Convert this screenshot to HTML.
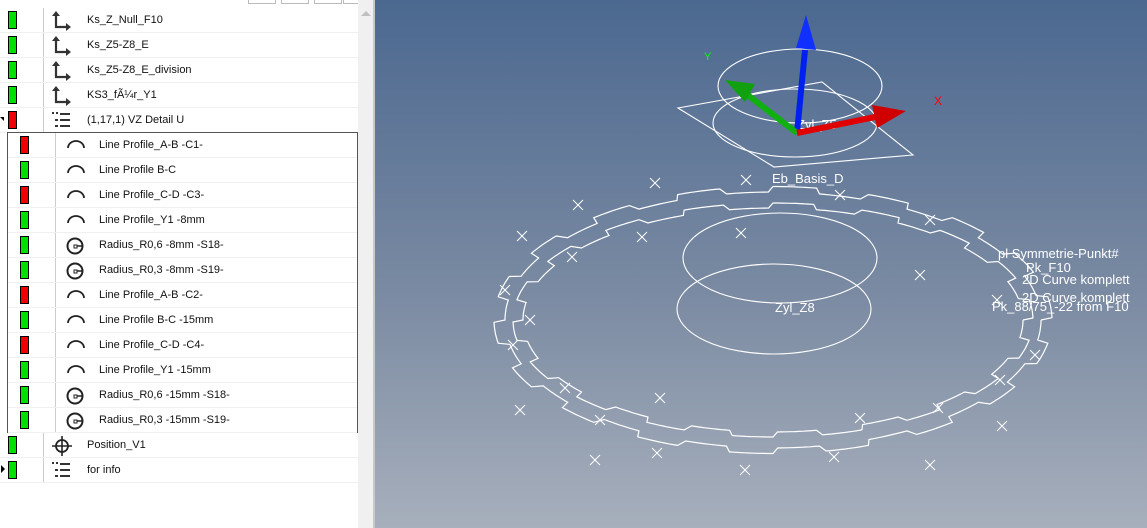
<!DOCTYPE html>
<html><head><meta charset="utf-8"><style>
*{margin:0;padding:0;box-sizing:border-box}
body{width:1147px;height:528px;overflow:hidden;background:#fff;font-family:"Liberation Sans","Noto Sans CJK JP",sans-serif;position:relative}
#left{position:absolute;left:0;top:0;width:358px;height:528px;background:#fff}
.row{position:absolute;left:0;width:358px;height:25px;border-bottom:1px solid #f0f0f0;font-size:11px;color:#111}
.bar{position:absolute;top:3px;width:9px;height:18px;border:1px solid #000}
.g{background:#00e000}.r{background:#f00000}
.txt{position:absolute;top:6px;white-space:nowrap}
.ic{position:absolute;top:2px}
#sb{position:absolute;left:358px;top:0;width:15px;height:528px;background:#f0f0f0}
#sbb{position:absolute;left:373px;top:0;width:2px;height:528px;background:#c8c8c8}
#vp{position:absolute;left:375px;top:0;width:772px;height:528px;background:linear-gradient(#4b6890,#7a8aa2 55%,#a7afbc)}
</style></head><body>
<div id="left">
<div style="position:absolute;left:248px;top:0;width:28px;height:4px;border:1px solid #bbb;border-top:none"></div>
<div style="position:absolute;left:281px;top:0;width:28px;height:4px;border:1px solid #bbb;border-top:none"></div>
<div style="position:absolute;left:314px;top:0;width:28px;height:4px;border:1px solid #bbb;border-top:none"></div>
<div style="position:absolute;left:343px;top:0;width:28px;height:4px;border:1px solid #bbb;border-top:none"></div>
<div style="position:absolute;left:43px;top:8px;width:1px;height:475px;background:#ccc"></div>
<div id="rows"></div>
<div style="position:absolute;left:7px;top:132px;width:351px;height:301px;border:1px solid #555;background:#fff" id="box"></div>
</div>
<div id="sb"><div style="position:absolute;left:3px;top:11px;width:0;height:0;border-left:5px solid transparent;border-right:5px solid transparent;border-bottom:5px solid #c0c0c0"></div></div>
<div id="sbb"></div>
<div id="vp"><svg id="svg" width="772" height="528" viewBox="375 0 772 528" style="position:absolute;left:0;top:0" font-family="Liberation Sans, sans-serif"></svg></div>
<script>
var ks='<svg width="24" height="22"><path d="M6 3v14h13" fill="none" stroke="#333" stroke-width="2.2"/><path d="M2 6l4-5 4 5z M16 13l5 4-5 4z" fill="#333"/></svg>';
var lst='<svg width="24" height="22"><g fill="#333"><rect x="2" y="2" width="2" height="2"/><rect x="6" y="2" width="2" height="2"/><rect x="10" y="3" width="10" height="2"/><rect x="5" y="9" width="3" height="2"/><rect x="10" y="9" width="10" height="2"/><rect x="5" y="15" width="3" height="2"/><rect x="10" y="15" width="10" height="2"/></g></svg>';
var arc='<svg width="24" height="22"><path d="M4 13a8 7 0 0 1 16 0" fill="none" stroke="#222" stroke-width="1.8"/></svg>';
var rad='<svg width="24" height="22"><circle cx="11" cy="11" r="7.5" fill="none" stroke="#222" stroke-width="2"/><path d="M11 11h8" stroke="#222" stroke-width="1.5"/><rect x="10" y="10" width="3" height="3" fill="#fff" stroke="#222" stroke-width="1"/></svg>';
var pos='<svg width="24" height="22"><circle cx="12" cy="11" r="6" fill="none" stroke="#222" stroke-width="1.8"/><path d="M12 1v20M2 11h20" stroke="#222" stroke-width="1.6"/></svg>';
var tops=[['g',ks,'Ks_Z_Null_F10',8],['g',ks,'Ks_Z5-Z8_E',33],['g',ks,'Ks_Z5-Z8_E_division',58],['g',ks,'KS3_fÃ¼r_Y1',83],['r',lst,'(1,17,1) VZ Detail U',108],['g',pos,'Position_V1',433],['g',lst,'for info',458]];
var h='';
tops.forEach(function(t){h+='<div class="row" style="top:'+t[3]+'px"><div class="bar '+t[0]+'" style="left:8px"></div><div class="ic" style="left:50px">'+t[1]+'</div><div class="txt" style="left:87px">'+t[2]+'</div></div>';});
h+='<div style="position:absolute;left:0;top:117px;border-top:4px solid #000;border-left:4px solid transparent;width:0;height:0"></div>';
h+='<div style="position:absolute;left:1px;top:465px;border-left:4px solid #000;border-top:4px solid transparent;border-bottom:4px solid transparent;width:0;height:0"></div>';
document.getElementById('rows').innerHTML=h;
var sub=[['r',arc,'Line Profile_A-B -C1-'],['g',arc,'Line Profile B-C'],['r',arc,'Line Profile_C-D -C3-'],['g',arc,'Line Profile_Y1 -8mm'],['g',rad,'Radius_R0,6 -8mm -S18-'],['g',rad,'Radius_R0,3 -8mm -S19-'],['r',arc,'Line Profile_A-B -C2-'],['g',arc,'Line Profile B-C -15mm'],['r',arc,'Line Profile_C-D -C4-'],['g',arc,'Line Profile_Y1 -15mm'],['g',rad,'Radius_R0,6 -15mm -S18-'],['g',rad,'Radius_R0,3 -15mm -S19-']];
h='<div style="position:absolute;left:47px;top:0;width:1px;height:299px;background:#ccc"></div>';
sub.forEach(function(t,i){h+='<div class="row" style="left:0;width:349px;top:'+(i*25)+'px"><div class="bar '+t[0]+'" style="left:12px"></div><div class="ic" style="left:56px">'+t[1]+'</div><div class="txt" style="left:91px">'+t[2]+'</div></div>';});
document.getElementById('box').innerHTML=h;
var s='';
function gear(cx,cy,rx,ry,d){var p='';for(var i=0;i<=360;i++){var a=i*Math.PI/180;var k=Math.floor(i/10)%2?d:0;var x=cx+(rx+k)*Math.cos(a),y=cy+(ry+k*0.5)*Math.sin(a);p+=(i?'L':'M')+x.toFixed(1)+' '+y.toFixed(1);}return p;}
s+='<path d="'+gear(773,320,268,128,11)+'" fill="none" stroke="#fff" stroke-width="1.2"/>';
s+='<path d="'+gear(773,320,250,112,10)+'" fill="none" stroke="#fff" stroke-width="1.2"/>';
s+='<g fill="none" stroke="#fff" stroke-width="1.1"><ellipse cx="780" cy="258" rx="97" ry="45"/><ellipse cx="774" cy="309" rx="97" ry="45"/><ellipse cx="800" cy="86" rx="82" ry="37"/><ellipse cx="795" cy="123" rx="82" ry="34"/><path d="M678 108L822 82L913 155L774 167Z"/></g>';
var xs=[[655,183],[746,180],[578,205],[840,195],[522,236],[642,237],[741,233],[930,220],[572,257],[505,290],[530,320],[513,345],[920,275],[997,300],[1035,355],[1000,380],[565,388],[660,398],[520,410],[600,420],[860,418],[938,408],[1002,426],[595,460],[657,453],[834,457],[930,465],[745,470]];
xs.forEach(function(p){s+='<path d="M'+(p[0]-5)+' '+(p[1]-5)+'l10 10M'+(p[0]+5)+' '+(p[1]-5)+'l-10 10" stroke="#fff" stroke-width="1"/>';});
s+='<g fill="#fff" font-size="13"><text x="772" y="183">Eb_Basis_D</text><text x="775" y="312">Zyl_Z8</text><text x="797" y="129">Zyl_Z5</text><text x="998" y="258">pl Symmetrie-Punkt#</text><text x="1026" y="272">Pk_F10</text><text x="1022" y="284">2D Curve komplett</text><text x="1022" y="302">2D Curve komplett</text><text x="992" y="311">Pk_88/75_-22 from F10</text></g>';
s+='<text x="704" y="60" fill="#0f0" font-size="11">Y</text><text x="934" y="105" fill="#f00" font-size="12">X</text>';
s+='<path d="M797 133L805 50" stroke="#0020f0" stroke-width="6"/><path d="M796 48L806 15L816 50Z" fill="#1030ff"/>';
s+='<path d="M797 133L745 93" stroke="#10b010" stroke-width="6"/><path d="M725 80L755 84L745 102Z" fill="#10a010"/>';
s+='<path d="M797 133L875 117" stroke="#e00000" stroke-width="6"/><path d="M872 105L906 111L877 128Z" fill="#d00000"/>';
document.getElementById('svg').innerHTML=s;
</script>
</body></html>
